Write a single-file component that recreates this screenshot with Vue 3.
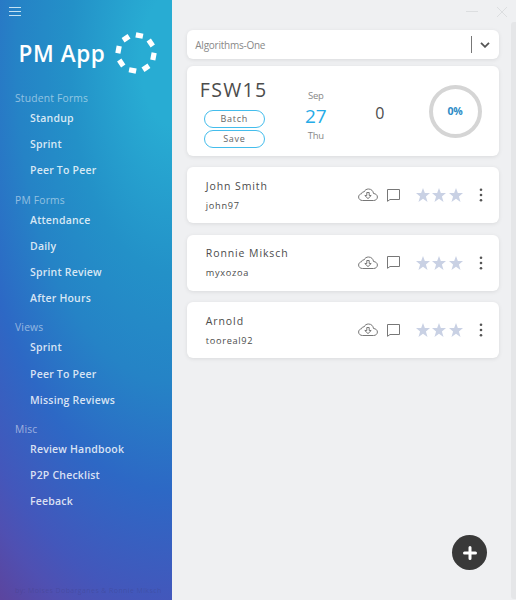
<script setup>
const groups = [
  { title: 'Student Forms', items: ['Standup', 'Sprint', 'Peer To Peer'] },
  { title: 'PM Forms', items: ['Attendance', 'Daily', 'Sprint Review', 'After Hours'] },
  { title: 'Views', items: ['Sprint', 'Peer To Peer', 'Missing Reviews'] },
  { title: 'Misc', items: ['Review Handbook', 'P2P Checklist', 'Feeback'] },
]
const students = [
  { name: 'John Smith', handle: 'john97' },
  { name: 'Ronnie Miksch', handle: 'myxozoa' },
  { name: 'Arnold', handle: 'tooreal92' },
]
</script>

<template>
  <div class="window">
    <aside class="sidebar">
      <svg class="burger" width="12" height="10" viewBox="0 0 12 10"><path d="M0 .5h12M0 4.500h12M0 8.500h12" stroke="#c5e3f3" stroke-width="1" /></svg>
      <header class="brand">
        <h1>PM App</h1>
        <svg class="logo" width="42" height="42" viewBox="-21 -21 42 42">
          <rect v-for="n in 8" :key="n" x="-3.6" y="-20.4" width="7.2" height="5.2" fill="#fff" :transform="`rotate(${n * 45 + 11})`" />
        </svg>
      </header>
      <nav>
        <section v-for="g in groups" :key="g.title" class="group">
          <h2>{{ g.title }}</h2>
          <a v-for="i in g.items" :key="i">{{ i }}</a>
        </section>
      </nav>
      <footer>by: Moises Dobarganes &amp; Ronnie Miksch</footer>
    </aside>

    <div class="content">
      <div class="titlebar">
        <svg width="42" height="12" viewBox="0 0 42 12" fill="none" stroke="#dcdee0" stroke-width="1"><path d="M0 5.500h12M31 1l10 10M41 1L31 11" /></svg>
      </div>
      <main>
        <div class="card select">
          <span>Algorithms-One</span>
          <i class="divider"></i>
          <svg width="10" height="6" viewBox="0 0 10 6"><path d="M1 .8l4 4L9 .8" fill="none" stroke="#555" stroke-width="1.8" /></svg>
        </div>

        <div class="card summary">
          <div class="cohort">
            <h3>FSW15</h3>
            <button>Batch</button>
            <button>Save</button>
          </div>
          <div class="date">
            <small>Sep</small>
            <b>27</b>
            <small>Thu</small>
          </div>
          <div class="count">0</div>
          <div class="ring">0%</div>
        </div>

        <div v-for="s in students" :key="s.handle" class="card student">
          <div class="who">
            <div class="name">{{ s.name }}</div>
            <div class="handle">{{ s.handle }}</div>
          </div>
          <svg class="cloud" width="20" height="14" viewBox="0 0 20 14" fill="none" stroke="#777" stroke-width="1">
            <path d="M4.600 12.500C2.200 12.500.6 11 .6 9c0-1.700 1.200-3 2.900-3.200C3.700 4.400 4.800 3.700 6 4 6.800 2 8.500 1 10.500 1c2.800 0 4.800 2 5 4.500 2.300.2 3.900 1.600 3.900 3.500 0 2-1.600 3.500-3.900 3.500z" />
            <path d="M8.800 4.500h2.400v3h2L10 10.600 6.800 7.500h2z" />
          </svg>
          <svg class="bubble" width="13" height="13" viewBox="0 0 13 13" fill="none" stroke="#777" stroke-width="1"><path d="M.5 12.300V.5h12v10H3z" /></svg>
          <div class="stars">
            <svg v-for="n in 3" :key="n" width="14" height="14" viewBox="0 0 13 13" fill="#c9d1e4"><path d="M6.500 0l1.700 4.700H13L9.200 7.800l1.500 5.200-4.200-3.100L2.300 13l1.500-5.200L0 4.700h4.800z" /></svg>
          </div>
          <svg class="dots" width="4" height="14" viewBox="0 0 4 14" fill="#555"><circle cx="2" cy="1.700" r="1.300" /><circle cx="2" cy="7" r="1.300" /><circle cx="2" cy="12.300" r="1.300" /></svg>
        </div>
      </main>
      <button class="add"><svg width="14" height="14" viewBox="0 0 14 14"><path d="M7 1.500v11M1.500 7h11" stroke="#fff" stroke-width="3" stroke-linecap="round" /></svg></button>
      <div class="scrollbar"></div>
    </div>
  </div>
</template>

<style>
body { margin: 0; background: #eff0f2; }
</style>

<style scoped>
* { box-sizing: border-box; }
h1, h2, h3 { margin: 0; font-weight: 400; }
.window { display: flex; width: 516px; height: 600px; overflow: hidden; font-family: 'Open Sans', 'Noto Sans', sans-serif; color: #4c4c4c; }
.sidebar { display: flex; flex-direction: column; width: 172px; height: 600px; background: radial-gradient(ellipse 310px 645px at 100% 10%, #28acd3 0%, #28acd3 10%, #2391c8 33%, #2583c6 50%, #2d68c5 67%, #4357bb 84%, #4f50b2 91%, #5b459f 100%); }
.burger { display: block; margin: 7px 0 0 9px; }
.brand { display: flex; align-items: center; height: 42px; margin: 15px 0 0 18.500px; color: #fff; }
.brand h1 { width: 96px; font-size: 22.500px; font-weight: 600; letter-spacing: .6px; white-space: nowrap; line-height: 43px; }
nav { padding-top: 17px; }
.group { margin-bottom: 9px; padding-left: 15px; }
h2 { height: 14px; font-size: 10.300px; line-height: 14px; letter-spacing: .2px; color: rgba(255, 255, 255, .5); }
.group a { display: block; height: 26.200px; padding-left: 15px; font-size: 10.500px; line-height: 26.200px; font-weight: 600; letter-spacing: .2px; color: rgba(255, 255, 255, .83); }
footer { margin: auto 0 3px 15px; font-size: 7px; line-height: 12px; letter-spacing: .4px; color: rgba(60, 60, 120, .3); white-space: nowrap; }
.content { position: relative; flex: 1; background: #eff0f2; }
.titlebar { display: flex; justify-content: flex-end; height: 30px; padding: 6px 8px 0 0; }
main { padding: 0 17.500px 0 15.300px; }
.card { display: flex; align-items: center; background: #fff; border-radius: 6px; box-shadow: 0 1px 4px rgba(0, 0, 0, .09); }
.select { height: 29px; padding: 0 9px 0 8px; font-size: 10px; color: #888; }
.select span { flex: 1; padding-top: 1px; letter-spacing: -.25px; }
.divider { width: 1px; height: 17px; margin-right: 8px; background: #777; }
.summary { height: 90px; margin-top: 7px; margin-bottom: 11px; padding: 0 17px 0 12.500px; }
.cohort { width: 75px; height: 100%; padding-top: 10px; }
.cohort h3 { height: 34px; font-size: 19.500px; line-height: 28px; letter-spacing: 1.300px; white-space: nowrap; }
.cohort button { display: block; width: 61px; height: 18px; margin: 0 0 1.500px 4px; padding: 0; border: 1px solid #44bdec; border-radius: 9px; background: #fff; font: 9px/16px 'Open Sans', sans-serif; letter-spacing: .7px; color: #666; }
.date { width: 64px; margin-left: 9px; padding-top: 10px; text-align: center; }
.date small { display: block; font-size: 9.500px; line-height: 14px; letter-spacing: -.2px; color: #888; }
.date b { display: block; font-size: 19px; line-height: 26px; font-weight: 400; color: #26abe7; }
.count { flex: 1; padding: 3px 0 0 27.500px; font-size: 16px; }
.ring { display: grid; place-items: center; width: 53px; height: 53px; border: 4px solid #d5d5d5; border-radius: 50%; font-size: 10.500px; line-height: 12px; letter-spacing: -.3px; padding-bottom: 1px; font-weight: 700; color: #2b8bc6; }
.student { height: 56px; margin-bottom: 11.700px; padding: 0 16px 0 18.500px; }
.who { flex: 1; padding-top: 1px; }
.name { font-size: 10.500px; line-height: 20px; letter-spacing: .9px; }
.handle { font-size: 9.200px; line-height: 20px; letter-spacing: .7px; }
.bubble { margin: 0 16px 0 9px; }
.stars { display: flex; gap: 2.500px; margin-right: 16px; }
.add { position: absolute; left: 280px; top: 535px; display: grid; place-items: center; width: 35px; height: 35px; padding: 0; border: 0; border-radius: 50%; background: #393939; }
.scrollbar { position: absolute; right: 0; top: 22px; width: 5px; height: 577px; background: #e5e6e8; border-radius: 3px 0 0 3px; }
</style>
